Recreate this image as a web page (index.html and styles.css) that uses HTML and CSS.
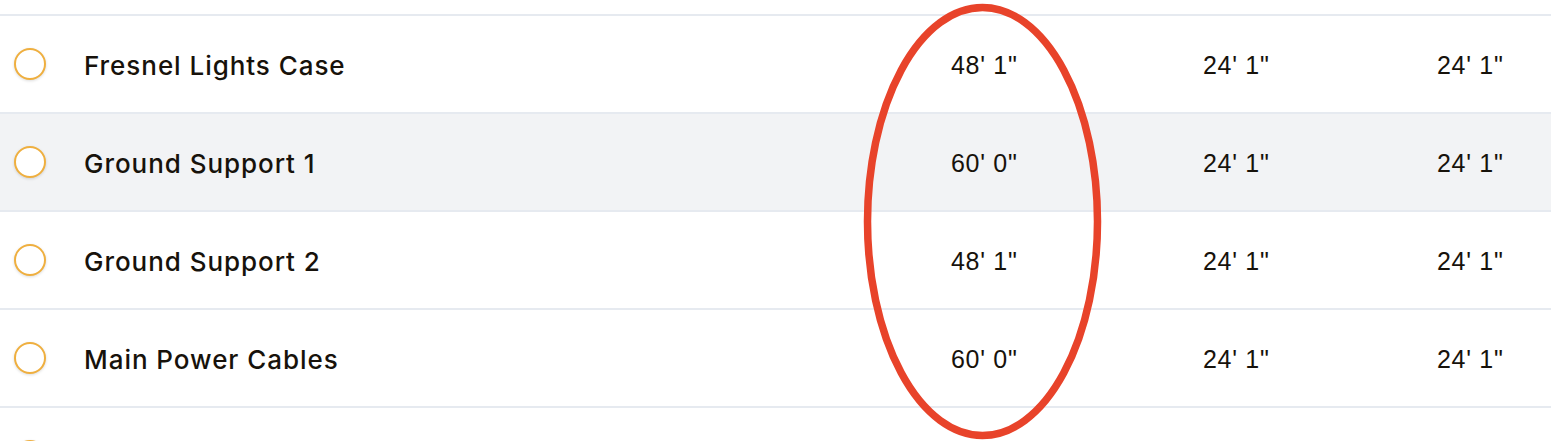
FILE: index.html
```html
<!DOCTYPE html>
<html>
<head>
<meta charset="utf-8">
<link rel="stylesheet" href="styles.css">
</head>
<body>
<div class="page">
  <div class="table">
    <div class="row">
      <div class="check"><span class="circle"></span></div>
      <div class="name">Fresnel Lights Case</div>
      <div class="val v1">48' 1"</div>
      <div class="val v2">24' 1"</div>
      <div class="val v3">24' 1"</div>
    </div>
    <div class="row alt">
      <div class="check"><span class="circle"></span></div>
      <div class="name">Ground Support 1</div>
      <div class="val v1">60' 0"</div>
      <div class="val v2">24' 1"</div>
      <div class="val v3">24' 1"</div>
    </div>
    <div class="row">
      <div class="check"><span class="circle"></span></div>
      <div class="name">Ground Support 2</div>
      <div class="val v1">48' 1"</div>
      <div class="val v2">24' 1"</div>
      <div class="val v3">24' 1"</div>
    </div>
    <div class="row">
      <div class="check"><span class="circle"></span></div>
      <div class="name">Main Power Cables</div>
      <div class="val v1">60' 0"</div>
      <div class="val v2">24' 1"</div>
      <div class="val v3">24' 1"</div>
    </div>
    <div class="row">
      <div class="check"><span class="circle"></span></div>
      <div class="name"></div>
      <div class="val v1"></div>
      <div class="val v2"></div>
      <div class="val v3"></div>
    </div>
  </div>
  <svg class="annotation" width="1551" height="441" viewBox="0 0 1551 441">
    <ellipse cx="982.5" cy="221.5" rx="115" ry="214" fill="none" stroke="#e8432a" stroke-width="7.5"/>
  </svg>
</div>
</body>
</html>
```

FILE: styles.css
```css
html, body {
  margin: 0;
  padding: 0;
  background: #ffffff;
}
body {
  width: 1551px;
  height: 441px;
  overflow: hidden;
  font-family: "Liberation Sans", Arial, sans-serif;
  color: #17120b;
}
.page {
  position: relative;
  width: 1551px;
  height: 441px;
  overflow: hidden;
}
.table {
  padding-top: 14px;
}
.row {
  display: grid;
  grid-template-columns: 84px 867px 252px 234px 1fr;
  align-items: center;
  height: 96px;
  border-top: 2px solid #e6eaf0;
  background: #ffffff;
}
.row.alt {
  background: #f2f3f5;
}
.check {
  display: flex;
  align-items: center;
  padding-left: 14px;
}
.circle {
  display: block;
  width: 28px;
  height: 28px;
  border: 2px solid #efaf3f;
  border-radius: 50%;
  background: #ffffff;
  box-shadow: 0 1px 3px rgba(0, 0, 0, 0.14);
}
.name {
  font-family: "Inter", "Liberation Sans", sans-serif;
  font-weight: 500;
  font-size: 26px;
  letter-spacing: 0.95px;
  padding-top: 2px;
  white-space: nowrap;
}
.val {
  font-size: 25px;
  letter-spacing: 0.7px;
  padding-top: 2px;
  white-space: nowrap;
}
.annotation {
  position: absolute;
  left: 0;
  top: 0;
  pointer-events: none;
}
```
